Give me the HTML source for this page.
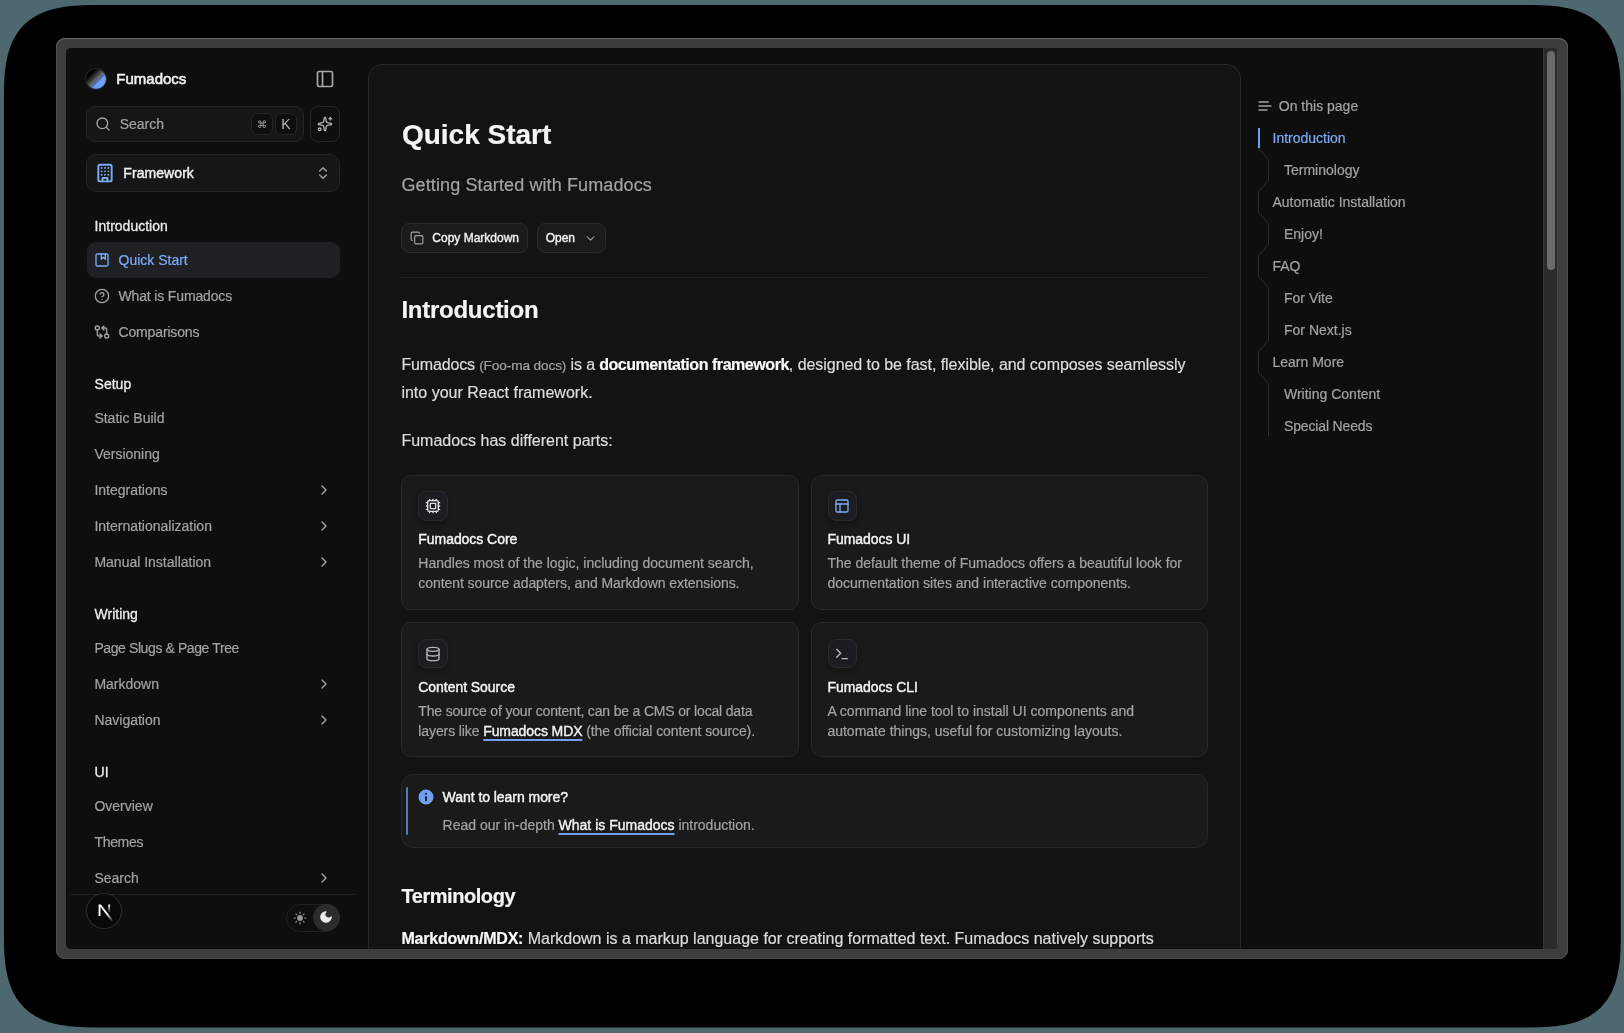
<!DOCTYPE html>
<html><head><meta charset="utf-8">
<style>
*{box-sizing:border-box;margin:0;padding:0}
html,body{width:1624px;height:1033px;overflow:hidden;background:#4e6870;font-family:"Liberation Sans",sans-serif;-webkit-font-smoothing:antialiased}
#frame{position:absolute;left:56px;top:38px;width:1512px;height:921px;background:#3d3d3d;border-radius:9px;box-shadow:inset 0 1px 0 #686868,inset 1px 0 0 #4e4e4e,inset -1px 0 0 #4e4e4e,inset 0 -1px 0 #4a4a4a}
#vp{position:absolute;left:10px;top:10px;width:1492px;height:901px;will-change:transform;background:#0e0e0e;border-radius:5px;overflow:hidden}
.abs{position:absolute}

.t{position:absolute;white-space:nowrap;line-height:20px;-webkit-text-stroke:0.2px currentColor}
.t.med,.med{-webkit-text-stroke:0.4px currentColor}
.t.hd{-webkit-text-stroke:0.3px currentColor}
#sb-track{position:absolute;left:1477px;top:0;width:15px;height:901px;background:#2b2b2b;border-left:1px solid #363636;border-right:1px solid #474747;border-bottom-right-radius:5px}
#sb-thumb{position:absolute;left:1481px;top:3px;width:8px;height:219px;background:#6b6b6b;border-radius:4px}
</style></head><body>
<svg id="shadow" style="position:absolute;left:0;top:0" width="1624" height="1033"><path d="M1520.8 5.0 L1533.2 5.0 L1540.2 5.2 L1545.9 5.4 L1551.0 5.8 L1555.6 6.2 L1559.9 6.8 L1563.9 7.4 L1567.7 8.2 L1571.2 9.0 L1574.6 10.0 L1577.8 11.0 L1580.9 12.2 L1583.8 13.4 L1586.6 14.8 L1589.2 16.2 L1591.8 17.8 L1594.2 19.4 L1596.5 21.2 L1598.7 23.1 L1600.8 25.0 L1602.7 27.1 L1604.6 29.3 L1606.4 31.6 L1608.0 34.0 L1609.6 36.6 L1611.0 39.2 L1612.4 42.0 L1613.6 44.9 L1614.8 48.0 L1615.8 51.2 L1616.8 54.6 L1617.6 58.1 L1618.4 61.9 L1619.0 65.9 L1619.6 70.2 L1620.0 74.8 L1620.4 79.9 L1620.6 85.6 L1620.8 92.6 L1620.8 105.0 L1620.8 927.4 L1620.8 939.8 L1620.6 946.8 L1620.4 952.5 L1620.0 957.6 L1619.6 962.2 L1619.0 966.5 L1618.4 970.5 L1617.6 974.3 L1616.8 977.8 L1615.8 981.2 L1614.8 984.4 L1613.6 987.5 L1612.4 990.4 L1611.0 993.2 L1609.6 995.8 L1608.0 998.4 L1606.4 1000.8 L1604.6 1003.1 L1602.7 1005.3 L1600.8 1007.4 L1598.7 1009.3 L1596.5 1011.2 L1594.2 1013.0 L1591.8 1014.6 L1589.2 1016.2 L1586.6 1017.6 L1583.8 1019.0 L1580.9 1020.2 L1577.8 1021.4 L1574.6 1022.4 L1571.2 1023.4 L1567.7 1024.2 L1563.9 1025.0 L1559.9 1025.6 L1555.6 1026.2 L1551.0 1026.6 L1545.9 1027.0 L1540.2 1027.2 L1533.2 1027.4 L1520.8 1027.4 L103.9 1027.4 L91.5 1027.4 L84.5 1027.2 L78.8 1027.0 L73.7 1026.6 L69.1 1026.2 L64.8 1025.6 L60.8 1025.0 L57.0 1024.2 L53.5 1023.4 L50.1 1022.4 L46.9 1021.4 L43.8 1020.2 L40.9 1019.0 L38.1 1017.6 L35.5 1016.2 L32.9 1014.6 L30.5 1013.0 L28.2 1011.2 L26.0 1009.3 L23.9 1007.4 L22.0 1005.3 L20.1 1003.1 L18.3 1000.8 L16.7 998.4 L15.1 995.8 L13.7 993.2 L12.3 990.4 L11.1 987.5 L9.9 984.4 L8.9 981.2 L7.9 977.8 L7.1 974.3 L6.3 970.5 L5.7 966.5 L5.1 962.2 L4.7 957.6 L4.3 952.5 L4.1 946.8 L3.9 939.8 L3.9 927.4 L3.9 105.0 L3.9 92.6 L4.1 85.6 L4.3 79.9 L4.7 74.8 L5.1 70.2 L5.7 65.9 L6.3 61.9 L7.1 58.1 L7.9 54.6 L8.9 51.2 L9.9 48.0 L11.1 44.9 L12.3 42.0 L13.7 39.2 L15.1 36.6 L16.7 34.0 L18.3 31.6 L20.1 29.3 L22.0 27.1 L23.9 25.0 L26.0 23.1 L28.2 21.2 L30.5 19.4 L32.9 17.8 L35.5 16.2 L38.1 14.8 L40.9 13.4 L43.8 12.2 L46.9 11.0 L50.1 10.0 L53.5 9.0 L57.0 8.2 L60.8 7.4 L64.8 6.8 L69.1 6.2 L73.7 5.8 L78.8 5.4 L84.5 5.2 L91.5 5.0 L103.9 5.0Z" fill="#000"/></svg>
<div id="frame"><div id="vp">

<!-- SIDEBAR -->
<div id="sidebar">
<div class="abs" style="left:20px;top:21px;width:20px;height:20px;border-radius:50%;background:linear-gradient(135deg,#000 25%,#6e6e6e 54%,#4d6fa6 55%,#4d6fa6 62%,#6e9ff0 63%);box-shadow:0 0 0 1px #262626"></div>
<div class="t" style="left:50.3px;top:21px;font-size:15px;letter-spacing:0px;color:#f2f2f2;-webkit-text-stroke:0.55px #f2f2f2">Fumadocs</div>
<svg class="abs" style="left:249px;top:21px;color:#a8a8a8" width="20" height="20" fill="none" stroke="currentColor" stroke-width="2" stroke-linecap="round" stroke-linejoin="round" viewBox="0 0 24 24"><rect width="18" height="18" x="3" y="3" rx="2"/><path d="M9 3v18"/></svg>
<div class="abs" style="left:20.2px;top:58.2px;width:217.7px;height:35.5px;background:#161616;border:1px solid #262626;border-radius:9px"></div>
<svg class="abs" style="left:29px;top:68px;color:#a3a3a3" width="16" height="16" fill="none" stroke="currentColor" stroke-width="2" stroke-linecap="round" stroke-linejoin="round" viewBox="0 0 24 24"><circle cx="11" cy="11" r="8"/><path d="m21 21-4.3-4.3"/></svg>
<div class="t" style="left:53.7px;top:66.4px;font-size:14px;color:#a3a3a3">Search</div>
<div class="abs" style="left:184.9px;top:65.1px;width:21.8px;height:21.8px;background:#0e0e0e;border:1px solid #262626;border-radius:6px;color:#a8a8a8;font-size:10px;line-height:21.5px;text-align:center">&#8984;</div>
<div class="abs" style="left:209.3px;top:65.1px;width:21.3px;height:21.8px;background:#0e0e0e;border:1px solid #262626;border-radius:6px;color:#b8b8b8;font-size:14px;line-height:20px;text-align:center">K</div>
<div class="abs" style="left:244.4px;top:58.3px;width:29.4px;height:35.7px;border:1px solid #262626;border-radius:8px"></div>
<svg class="abs" style="left:251px;top:68px;color:#b0b0b0" width="16" height="16" fill="none" stroke="currentColor" stroke-width="2" stroke-linecap="round" stroke-linejoin="round" viewBox="0 0 24 24"><path d="M11.017 2.814a1 1 0 0 1 1.966 0l1.051 5.558a2 2 0 0 0 1.594 1.594l5.558 1.051a1 1 0 0 1 0 1.966l-5.558 1.051a2 2 0 0 0-1.594 1.594l-1.051 5.558a1 1 0 0 1-1.966 0l-1.051-5.558a2 2 0 0 0-1.594-1.594l-5.558-1.051a1 1 0 0 1 0-1.966l5.558-1.051a2 2 0 0 0 1.594-1.594z"/><path d="M20 2v4"/><path d="M22 4h-4"/><circle cx="4" cy="20" r="2"/></svg>
<div class="abs" style="left:20.2px;top:106.2px;width:253.7px;height:37.7px;background:#161616;border:1px solid #262626;border-radius:10px"></div>
<svg class="abs" style="left:29.2px;top:114.6px;color:#7cacf8" width="20" height="20" fill="none" stroke="currentColor" stroke-width="2.3" stroke-linecap="round" stroke-linejoin="round" viewBox="0 0 24 24"><rect width="16" height="20" x="4" y="2" rx="2" ry="2"/><path d="M9 22v-4h6v4"/><path d="M8 6h.01"/><path d="M16 6h.01"/><path d="M12 6h.01"/><path d="M12 10h.01"/><path d="M12 14h.01"/><path d="M16 10h.01"/><path d="M16 14h.01"/><path d="M8 10h.01"/><path d="M8 14h.01"/></svg>
<div class="t med" style="left:57.3px;top:115.3px;font-size:14px;letter-spacing:0.07px;color:#f2f2f2">Framework</div>
<svg class="abs" style="left:249px;top:117px;color:#a8a8a8" width="16" height="16" fill="none" stroke="currentColor" stroke-width="2" stroke-linecap="round" stroke-linejoin="round" viewBox="0 0 24 24"><path d="m7 15 5 5 5-5"/><path d="m7 9 5-5 5 5"/></svg>
<div class="t hd" style="left:28.6px;top:168.3px;font-size:14px;color:#ededed">Introduction</div>
<div class="abs" style="left:20.5px;top:194px;width:253.5px;height:36px;background:#1e2024;border-radius:9px"></div>
<svg class="abs" style="left:28px;top:204px;color:#7cacf8" width="16" height="16" fill="none" stroke="currentColor" stroke-width="2" stroke-linecap="round" stroke-linejoin="round" viewBox="0 0 24 24"><rect width="18" height="18" x="3" y="3" rx="2" ry="2"/><polyline points="11 3 11 11 14 8 17 11 17 3"/></svg>
<div class="t" style="left:52.5px;top:202px;font-size:14px;color:#7cacf8">Quick Start</div>
<svg class="abs" style="left:28px;top:240px;color:#a3a3a3" width="16" height="16" fill="none" stroke="currentColor" stroke-width="2" stroke-linecap="round" stroke-linejoin="round" viewBox="0 0 24 24"><circle cx="12" cy="12" r="10"/><path d="M9.09 9a3 3 0 0 1 5.83 1c0 2-3 3-3 3"/><path d="M12 17h.01"/></svg>
<div class="t" style="left:52.5px;top:238px;font-size:14px;color:#a3a3a3;letter-spacing:-0.15px">What is Fumadocs</div>
<svg class="abs" style="left:28px;top:276px;color:#a3a3a3" width="16" height="16" fill="none" stroke="currentColor" stroke-width="2" stroke-linecap="round" stroke-linejoin="round" viewBox="0 0 24 24"><circle cx="5" cy="6" r="3"/><path d="M12 6h5a2 2 0 0 1 2 2v7"/><path d="m15 9-3-3 3-3"/><circle cx="19" cy="18" r="3"/><path d="M12 18H7a2 2 0 0 1-2-2V9"/><path d="m9 15 3 3-3 3"/></svg>
<div class="t" style="left:52.5px;top:274px;font-size:14px;color:#a3a3a3;letter-spacing:-0.15px">Comparisons</div>
<div class="t hd" style="left:28.6px;top:326.3px;font-size:14px;color:#ededed">Setup</div>
<div class="t" style="left:28.4px;top:360px;font-size:14px;color:#a3a3a3">Static Build</div>
<div class="t" style="left:28.4px;top:396px;font-size:14px;color:#a3a3a3">Versioning</div>
<div class="t" style="left:28.4px;top:432px;font-size:14px;color:#a3a3a3">Integrations</div>
<svg class="abs" style="left:250.3px;top:434px;color:#a3a3a3" width="16" height="16" fill="none" stroke="currentColor" stroke-width="2" stroke-linecap="round" stroke-linejoin="round" viewBox="0 0 24 24"><path d="m9 18 6-6-6-6"/></svg>
<div class="t" style="left:28.4px;top:468px;font-size:14px;color:#a3a3a3">Internationalization</div>
<svg class="abs" style="left:250.3px;top:470px;color:#a3a3a3" width="16" height="16" fill="none" stroke="currentColor" stroke-width="2" stroke-linecap="round" stroke-linejoin="round" viewBox="0 0 24 24"><path d="m9 18 6-6-6-6"/></svg>
<div class="t" style="left:28.4px;top:504px;font-size:14px;color:#a3a3a3">Manual Installation</div>
<svg class="abs" style="left:250.3px;top:506px;color:#a3a3a3" width="16" height="16" fill="none" stroke="currentColor" stroke-width="2" stroke-linecap="round" stroke-linejoin="round" viewBox="0 0 24 24"><path d="m9 18 6-6-6-6"/></svg>
<div class="t hd" style="left:28.6px;top:556px;font-size:14px;color:#ededed">Writing</div>
<div class="t" style="left:28.4px;top:590px;font-size:14px;color:#a3a3a3;letter-spacing:-0.4px">Page Slugs &amp; Page Tree</div>
<div class="t" style="left:28.4px;top:626px;font-size:14px;color:#a3a3a3">Markdown</div>
<svg class="abs" style="left:250.3px;top:628px;color:#a3a3a3" width="16" height="16" fill="none" stroke="currentColor" stroke-width="2" stroke-linecap="round" stroke-linejoin="round" viewBox="0 0 24 24"><path d="m9 18 6-6-6-6"/></svg>
<div class="t" style="left:28.4px;top:662px;font-size:14px;color:#a3a3a3">Navigation</div>
<svg class="abs" style="left:250.3px;top:664px;color:#a3a3a3" width="16" height="16" fill="none" stroke="currentColor" stroke-width="2" stroke-linecap="round" stroke-linejoin="round" viewBox="0 0 24 24"><path d="m9 18 6-6-6-6"/></svg>
<div class="t hd" style="left:28.6px;top:713.5px;font-size:14px;color:#ededed">UI</div>
<div class="t" style="left:28.4px;top:748px;font-size:14px;color:#a3a3a3">Overview</div>
<div class="t" style="left:28.4px;top:784px;font-size:14px;color:#a3a3a3;letter-spacing:-0.3px">Themes</div>
<div class="t" style="left:28.4px;top:820px;font-size:14px;color:#a3a3a3">Search</div>
<svg class="abs" style="left:250.3px;top:822px;color:#a3a3a3" width="16" height="16" fill="none" stroke="currentColor" stroke-width="2" stroke-linecap="round" stroke-linejoin="round" viewBox="0 0 24 24"><path d="m9 18 6-6-6-6"/></svg>
<div class="abs" style="left:4px;top:846px;width:286px;height:1px;background:#1f1f1f"></div>
<div class="abs" style="left:20.2px;top:844.6px;width:36.3px;height:36.1px;border-radius:50%;background:#080808;border:1px solid #2c2c2c"></div>
<svg class="abs" style="left:24.1px;top:848.4px" width="28.5" height="28.5" viewBox="0 0 180 180"><defs><linearGradient id="ng0" x1="109" y1="116.5" x2="144.5" y2="160.5" gradientUnits="userSpaceOnUse"><stop stop-color="#fff"/><stop offset="1" stop-color="#fff" stop-opacity="0"/></linearGradient><linearGradient id="ng1" x1="121" y1="54" x2="120.8" y2="106.9" gradientUnits="userSpaceOnUse"><stop stop-color="#fff"/><stop offset="1" stop-color="#fff" stop-opacity="0"/></linearGradient><clipPath id="nc"><circle cx="90" cy="90" r="90"/></clipPath></defs><g clip-path="url(#nc)"><path d="M149.508 157.52L69.142 54H54V125.97H66.1136V69.3836L139.999 164.845C143.333 162.614 146.509 160.165 149.508 157.52Z" fill="url(#ng0)"/><rect x="115" y="54" width="12" height="72" fill="url(#ng1)"/></g></svg>
<div class="abs" style="left:220.2px;top:856px;width:53.8px;height:27.6px;border-radius:14px;border:1px solid #222"></div>
<div class="abs" style="left:247.2px;top:856px;width:26.8px;height:27.4px;border-radius:50%;background:#2c2c2c"></div>
<svg class="abs" style="left:227.1px;top:862.6px;color:#9a9a9a" width="14" height="14" fill="currentColor" stroke="currentColor" stroke-width="2" stroke-linecap="round" stroke-linejoin="round" viewBox="0 0 24 24"><circle cx="12" cy="12" r="4"/><path d="M12 2v2"/><path d="M12 20v2"/><path d="m4.93 4.93 1.41 1.41"/><path d="m17.66 17.66 1.41 1.41"/><path d="M2 12h2"/><path d="M20 12h2"/><path d="m6.34 17.66-1.41 1.41"/><path d="m19.07 4.93-1.41 1.41"/></svg>
<svg class="abs" style="left:252.7px;top:862.4px;color:#ececec" width="14" height="14" fill="currentColor" stroke="currentColor" stroke-width="2" stroke-linecap="round" stroke-linejoin="round" viewBox="0 0 24 24"><path d="M12 3a6 6 0 0 0 9 9 9 9 0 1 1-9-9Z"/></svg>
</div>

<!-- MAIN CARD -->
<div id="card" class="abs" style="left:301.9px;top:16px;width:873px;height:1000px;background:#131313;border:1px solid #25272a;border-radius:14px"></div>
<div id="main">
<div class="t" style="left:335.9px;top:68.5px;line-height:36px;font-size:28px;font-weight:700;color:#f5f5f5">Quick Start</div>
<div class="t" style="left:335.4px;top:123.1px;line-height:28px;font-size:18px;letter-spacing:0.12px;color:#a3a3a3">Getting Started with Fumadocs</div>
<div class="abs" style="left:335.4px;top:175.4px;width:127.1px;height:29.4px;background:#1b1b1b;border:1px solid #2a2a2a;border-radius:8px"></div>
<svg class="abs" style="left:344px;top:183.4px;color:#a3a3a3" width="14" height="14" fill="none" stroke="currentColor" stroke-width="2" stroke-linecap="round" stroke-linejoin="round" viewBox="0 0 24 24"><rect width="14" height="14" x="8" y="8" rx="2" ry="2"/><path d="M4 16c-1.1 0-2-.9-2-2V4c0-1.1.9-2 2-2h10c1.1 0 2 .9 2 2"/></svg>
<div class="t med" style="left:366.3px;top:180px;font-size:12px;letter-spacing:0px;color:#f0f0f0">Copy Markdown</div>
<div class="abs" style="left:470.9px;top:175.4px;width:68.8px;height:29.4px;background:#1b1b1b;border:1px solid #2a2a2a;border-radius:8px"></div>
<div class="t med" style="left:479.7px;top:180px;font-size:12px;letter-spacing:0px;color:#f0f0f0">Open</div>
<svg class="abs" style="left:517.6px;top:183.7px;color:#a3a3a3" width="13" height="13" fill="none" stroke="currentColor" stroke-width="2" stroke-linecap="round" stroke-linejoin="round" viewBox="0 0 24 24"><path d="m6 9 6 6 6-6"/></svg>
<div class="abs" style="left:335px;top:229px;width:807px;height:1px;background:#232323"></div>
<div class="t" style="left:335.4px;top:246.3px;line-height:32px;font-size:24px;font-weight:700;letter-spacing:-0.25px;color:#f5f5f5">Introduction</div>
<div class="t" style="left:335.4px;top:303px;font-size:16px;line-height:28px;letter-spacing:-0.15px;color:#dcdcdc">Fumadocs <span style="font-size:13.6px;color:#a3a3a3;letter-spacing:-0.1px">(Foo-ma docs)</span> is a <b style="color:#fafafa;letter-spacing:-0.45px">documentation framework</b><span style="letter-spacing:-0.05px">, designed to be fast, flexible, and composes seamlessly</span></div>
<div class="t" style="left:335.4px;top:331px;font-size:16px;line-height:28px;letter-spacing:0px;color:#dcdcdc">into your React framework.</div>
<div class="t" style="left:335.4px;top:379px;font-size:16px;line-height:28px;letter-spacing:0px;color:#dcdcdc">Fumadocs has different parts:</div>
<div class="abs" style="left:335.4px;top:426.6px;width:397.5px;height:135.2px;background:#1a1a1a;border:1px solid #282829;border-radius:10px"></div>
<div class="abs" style="left:352.4px;top:443.0px;width:29.7px;height:29.9px;background:#1c1d20;border:1px solid #2b2b2b;border-radius:8px;box-shadow:0 2px 6px rgba(0,0,0,0.3)"></div>
<svg class="abs" style="left:359.2px;top:450.0px;color:#e0e0e0" width="16" height="16" fill="none" stroke="currentColor" stroke-width="2" stroke-linecap="round" stroke-linejoin="round" viewBox="0 0 24 24"><path d="M12 20v2"/><path d="M12 2v2"/><path d="M17 20v2"/><path d="M17 2v2"/><path d="M2 12h2"/><path d="M2 17h2"/><path d="M2 7h2"/><path d="M20 12h2"/><path d="M20 17h2"/><path d="M20 7h2"/><path d="M7 20v2"/><path d="M7 2v2"/><rect x="4" y="4" width="16" height="16" rx="2"/><rect x="8" y="8" width="8" height="8" rx="1"/></svg>
<div class="t med" style="left:352.29999999999995px;top:481.20000000000005px;font-size:14px;letter-spacing:-0.05px;color:#f5f5f5">Fumadocs Core</div>
<div class="t" style="left:352.29999999999995px;top:505.20000000000005px;font-size:14px;color:#a3a3a3">Handles most of the logic, including document search,</div>
<div class="t" style="left:352.29999999999995px;top:525.2px;font-size:14px;color:#a3a3a3;letter-spacing:-0.07px">content source adapters, and Markdown extensions.</div>
<div class="abs" style="left:744.5px;top:426.6px;width:397.5px;height:135.2px;background:#1a1a1a;border:1px solid #282829;border-radius:10px"></div>
<div class="abs" style="left:761.5px;top:443.0px;width:29.7px;height:29.9px;background:#1c1d20;border:1px solid #2b2b2b;border-radius:8px;box-shadow:0 2px 6px rgba(0,0,0,0.3)"></div>
<svg class="abs" style="left:768.3px;top:450.0px;color:#7cacf8" width="16" height="16" fill="none" stroke="currentColor" stroke-width="2" stroke-linecap="round" stroke-linejoin="round" viewBox="0 0 24 24"><rect width="18" height="18" x="3" y="3" rx="2"/><path d="M3 9h18"/><path d="M9 21V9"/></svg>
<div class="t med" style="left:761.4px;top:481.20000000000005px;font-size:14px;letter-spacing:-0.05px;color:#f5f5f5">Fumadocs UI</div>
<div class="t" style="left:761.4px;top:505.20000000000005px;font-size:14px;color:#a3a3a3">The default theme of Fumadocs offers a beautiful look for</div>
<div class="t" style="left:761.4px;top:525.2px;font-size:14px;color:#a3a3a3">documentation sites and interactive components.</div>
<div class="abs" style="left:335.4px;top:574.2px;width:397.5px;height:135.2px;background:#1a1a1a;border:1px solid #282829;border-radius:10px"></div>
<div class="abs" style="left:352.4px;top:590.6px;width:29.7px;height:29.9px;background:#1c1d20;border:1px solid #2b2b2b;border-radius:8px;box-shadow:0 2px 6px rgba(0,0,0,0.3)"></div>
<svg class="abs" style="left:359.2px;top:597.6px;color:#b8b8b8" width="16" height="16" fill="none" stroke="currentColor" stroke-width="2" stroke-linecap="round" stroke-linejoin="round" viewBox="0 0 24 24"><ellipse cx="12" cy="5" rx="9" ry="3"/><path d="M3 5V19A9 3 0 0 0 21 19V5"/><path d="M3 12A9 3 0 0 0 21 12"/></svg>
<div class="t med" style="left:352.29999999999995px;top:628.8000000000001px;font-size:14px;letter-spacing:-0.05px;color:#f5f5f5">Content Source</div>
<div class="t" style="left:352.29999999999995px;top:652.8000000000001px;font-size:14px;color:#a3a3a3;letter-spacing:-0.17px">The source of your content, can be a CMS or local data</div>
<div class="t" style="left:352.29999999999995px;top:672.8000000000001px;font-size:14px;color:#a3a3a3;letter-spacing:-0.1px">layers like <span class="med" style="color:#f0f0f0;text-decoration:underline;text-decoration-color:#6e9ff0;text-underline-offset:3px;text-decoration-thickness:1.5px">Fumadocs MDX</span> (the official content source).</div>
<div class="abs" style="left:744.5px;top:574.2px;width:397.5px;height:135.2px;background:#1a1a1a;border:1px solid #282829;border-radius:10px"></div>
<div class="abs" style="left:761.5px;top:590.6px;width:29.7px;height:29.9px;background:#1c1d20;border:1px solid #2b2b2b;border-radius:8px;box-shadow:0 2px 6px rgba(0,0,0,0.3)"></div>
<svg class="abs" style="left:768.3px;top:597.6px;color:#b8b8b8" width="16" height="16" fill="none" stroke="currentColor" stroke-width="2" stroke-linecap="round" stroke-linejoin="round" viewBox="0 0 24 24"><polyline points="4 17 10 11 4 5"/><line x1="12" x2="20" y1="19" y2="19"/></svg>
<div class="t med" style="left:761.4px;top:628.8000000000001px;font-size:14px;letter-spacing:-0.05px;color:#f5f5f5">Fumadocs CLI</div>
<div class="t" style="left:761.4px;top:652.8000000000001px;font-size:14px;color:#a3a3a3">A command line tool to install UI components and</div>
<div class="t" style="left:761.4px;top:672.8000000000001px;font-size:14px;color:#a3a3a3">automate things, useful for customizing layouts.</div>
<div class="abs" style="left:335px;top:726px;width:807px;height:73.5px;background:#1a1a1a;border:1px solid #27282b;border-radius:12px"></div>
<div class="abs" style="left:340.2px;top:738.7px;width:1.6px;height:48px;background:#5479bb;border-radius:1px"></div>
<svg class="abs" style="left:350.25px;top:738.6px" width="20" height="20" viewBox="0 0 24 24"><circle cx="12" cy="12" r="10" fill="#6e9ff0" stroke="#1a1a1a" stroke-width="2"/><path d="M12 16v-4" stroke="#1a1a1a" stroke-width="2.2" stroke-linecap="round"/><path d="M12 8h.01" stroke="#1a1a1a" stroke-width="2.4" stroke-linecap="round"/></svg>
<div class="t med" style="left:376.6px;top:739.2px;font-size:14px;letter-spacing:-0.05px;color:#f5f5f5">Want to learn more?</div>
<div class="t" style="left:376.6px;top:766.8px;font-size:14px;color:#a3a3a3">Read our in-depth <span class="med" style="color:#f0f0f0;text-decoration:underline;text-decoration-color:#6e9ff0;text-underline-offset:3px;text-decoration-thickness:1.5px">What is Fumadocs</span> introduction.</div>
<div class="t" style="left:335.5px;top:833.9px;line-height:28px;font-size:20px;font-weight:700;letter-spacing:-0.45px;color:#f5f5f5">Terminology</div>
<div class="t" style="left:335.4px;top:876.8px;font-size:16px;line-height:28px;letter-spacing:0px;color:#dcdcdc"><b style="color:#fafafa;letter-spacing:-0.2px">Markdown/MDX:</b> Markdown is a markup language for creating formatted text. Fumadocs natively supports</div>
</div>

<!-- TOC -->
<div id="toc">
<svg class="abs" style="left:1190.8px;top:50px;color:#a3a3a3" width="16" height="16" fill="none" stroke="currentColor" stroke-width="2" stroke-linecap="round" stroke-linejoin="round" viewBox="0 0 24 24"><path d="M15 18H3"/><path d="M17 6H3"/><path d="M21 12H3"/></svg>
<div class="t" style="left:1212.8px;top:48px;font-size:14px;color:#a3a3a3">On this page</div>
<div class="t" style="left:1206.5px;top:80.16px;font-size:14px;color:#7cacf8">Introduction</div>
<div class="t" style="left:1218px;top:112.16px;font-size:14px;color:#a3a3a3">Terminology</div>
<div class="t" style="left:1206.5px;top:144.16px;font-size:14px;color:#a3a3a3">Automatic Installation</div>
<div class="t" style="left:1218px;top:176.16px;font-size:14px;color:#a3a3a3">Enjoy!</div>
<div class="t" style="left:1206.5px;top:208.16px;font-size:14px;color:#a3a3a3">FAQ</div>
<div class="t" style="left:1218px;top:240.16px;font-size:14px;color:#a3a3a3">For Vite</div>
<div class="t" style="left:1218px;top:272.15999999999997px;font-size:14px;color:#a3a3a3">For Next.js</div>
<div class="t" style="left:1206.5px;top:304.15999999999997px;font-size:14px;color:#a3a3a3">Learn More</div>
<div class="t" style="left:1218px;top:336.15999999999997px;font-size:14px;color:#a3a3a3">Writing Content</div>
<div class="t" style="left:1218px;top:368.15999999999997px;font-size:14px;color:#a3a3a3;letter-spacing:-0.15px">Special Needs</div>
<svg class="abs" style="left:0;top:0" width="1477" height="500"><path d="M1192.5 80 L1192.5 100 L1202.5 112 L1202.5 132 L1192.5 144 L1192.5 164 L1202.5 176 L1202.5 196 L1192.5 208 L1192.5 228 L1202.5 240 L1202.5 260 L1202.5 272 L1202.5 292 L1192.5 304 L1192.5 324 L1202.5 336 L1202.5 356 L1202.5 368 L1202.5 388 " fill="none" stroke="#2e2e2e" stroke-width="1"/></svg>
<div class="abs" style="left:1191.8px;top:80px;width:2px;height:20px;background:#6e9ff0"></div>
</div>

<div id="sb-track"></div>
<div id="sb-thumb"></div>
</div></div>
</body></html>
